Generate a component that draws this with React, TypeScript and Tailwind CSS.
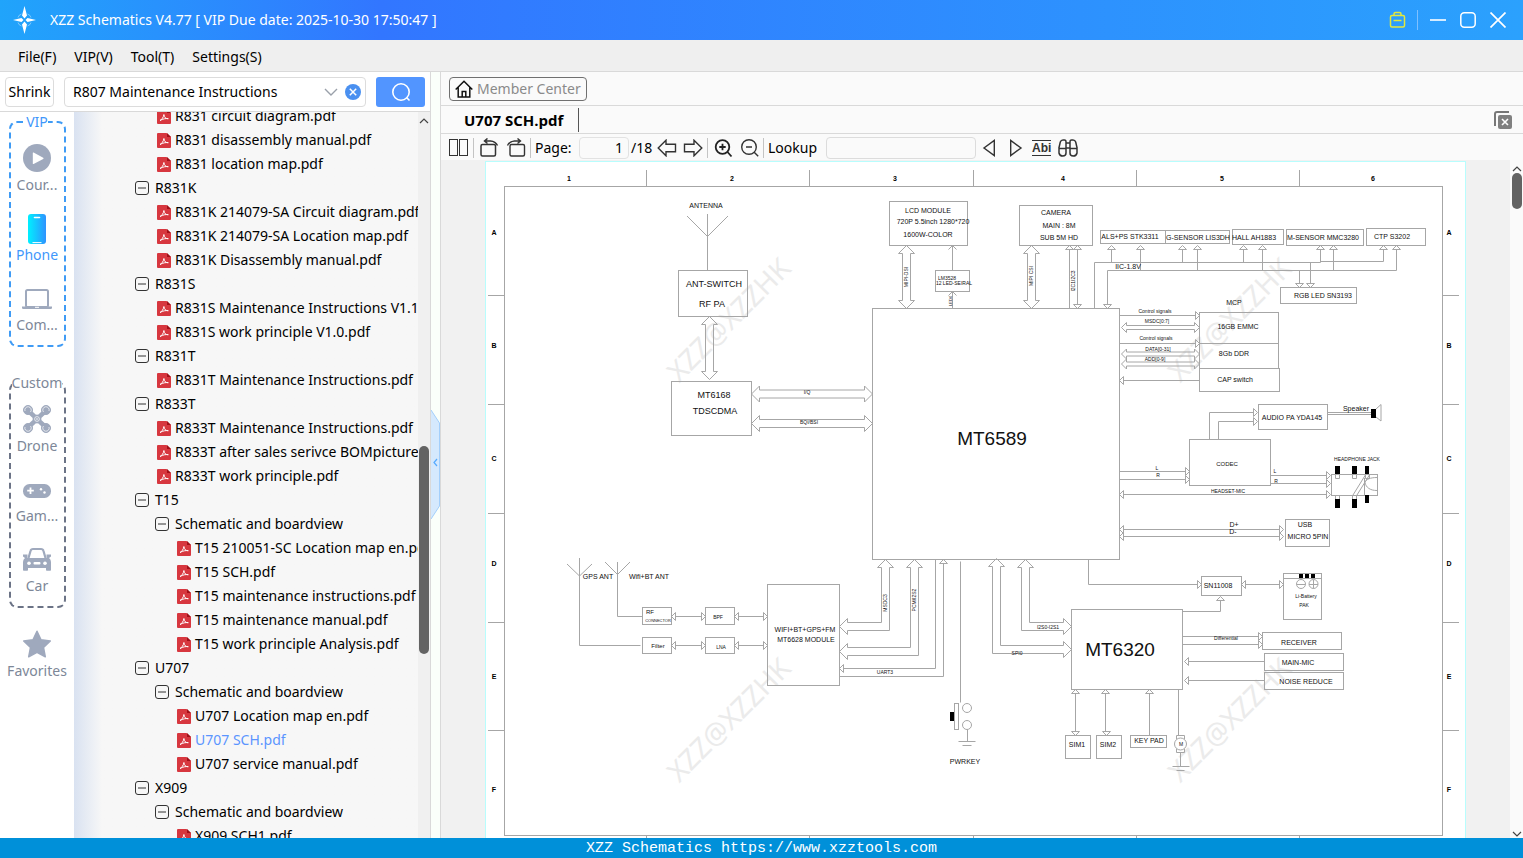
import { useState } from "react";
import type { ReactNode } from "react";

interface TreeRow {
    label: string
    level: number
    file?: boolean
}

const rows: TreeRow[] = [
    { label: "R831 circuit diagram.pdf", level: 1, file: true },
    { label: "R831 disassembly manual.pdf", level: 1, file: true },
    { label: "R831 location map.pdf", level: 1, file: true },
    { label: "R831K", level: 0 },
    { label: "R831K 214079-SA Circuit diagram.pdf", level: 1, file: true },
    { label: "R831K 214079-SA Location map.pdf", level: 1, file: true },
    { label: "R831K Disassembly manual.pdf", level: 1, file: true },
    { label: "R831S", level: 0 },
    { label: "R831S Maintenance Instructions V1.1.pdf", level: 1, file: true },
    { label: "R831S work principle V1.0.pdf", level: 1, file: true },
    { label: "R831T", level: 0 },
    { label: "R831T Maintenance Instructions.pdf", level: 1, file: true },
    { label: "R833T", level: 0 },
    { label: "R833T Maintenance Instructions.pdf", level: 1, file: true },
    { label: "R833T after sales serivce BOMpicture.pdf", level: 1, file: true },
    { label: "R833T work principle.pdf", level: 1, file: true },
    { label: "T15", level: 0 },
    { label: "Schematic and boardview", level: 1 },
    { label: "T15 210051-SC Location map en.pdf", level: 2, file: true },
    { label: "T15 SCH.pdf", level: 2, file: true },
    { label: "T15 maintenance instructions.pdf", level: 2, file: true },
    { label: "T15 maintenance manual.pdf", level: 2, file: true },
    { label: "T15 work principle Analysis.pdf", level: 2, file: true },
    { label: "U707", level: 0 },
    { label: "Schematic and boardview", level: 1 },
    { label: "U707 Location map en.pdf", level: 2, file: true },
    { label: "U707 SCH.pdf", level: 2, file: true },
    { label: "U707 service manual.pdf", level: 2, file: true },
    { label: "X909", level: 0 },
    { label: "Schematic and boardview", level: 1 },
    { label: "X909 SCH1.pdf", level: 2, file: true },
];

const indents = ["pl-[61px]", "pl-[81px]", "pl-[101px]"];

const PdfIcon = () => (
    <svg className="ml-[2px] h-[15px] w-[14px] shrink-0" viewBox="0 0 14 15" aria-hidden="true">
        <path d="M1 0h8.5L14 4v10a1 1 0 0 1-1 1H1a1 1 0 0 1-1-1V1a1 1 0 0 1 1-1z" fill="#d7373f" />
        <path d="M10 0l4 4h-4z" fill="#a01018" />
        <path d="M3 11.5c1.5-.6 3.6-3.2 3.9-6 .3 2.800 1.700 4.300 4.400 4.200-2.600-.4-5.300.1-8.300 1.800z" fill="none" stroke="#fff" strokeWidth="1" strokeLinejoin="round" />
    </svg>
);

const MinusBox = () => (
    <svg className="h-[14px] w-[14px] shrink-0" viewBox="0 0 14 14" fill="none" stroke="#333" aria-hidden="true">
        <rect x=".5" y=".5" width="13" height="13" rx="2.500" />
        <path d="M3 7h8" />
    </svg>
);

const CourseIcon = () => (
    <svg className="h-7 w-[30px]" viewBox="0 0 30 28" aria-hidden="true">
        <circle cx="15" cy="14" r="14" fill="#9fa9bd" />
        <path d="M10.800 9v10.500q0 .8.800.400l9.600-5q.8-.6 0-1.200l-9.600-5.200q-.8-.4-.8.500z" fill="#fff" />
    </svg>
);

const PhoneIcon = () => (
    <svg className="h-7 w-[30px] overflow-visible" viewBox="0 0 30 28" aria-hidden="true">
        <defs>
            <linearGradient id="phone" x1="0" x2="1" y1="0" y2="0">
                <stop offset="0" stopColor="#00f0ff" />
                <stop offset="1" stopColor="#2e93ff" />
            </linearGradient>
        </defs>
        <rect x="6" y="0" width="18" height="30" rx="3" fill="url(#phone)" />
        <path d="M12.500 3.500h5" stroke="#fff" strokeWidth="1.600" strokeLinecap="round" />
        <path d="M10.500 28.600h9" stroke="#fff" strokeWidth="1" />
    </svg>
);

const LaptopIcon = () => (
    <svg className="h-7 w-[30px]" viewBox="0 0 30 28" aria-hidden="true">
        <rect x="4" y="6" width="22" height="17" rx="1.500" fill="none" stroke="#9fa9bd" strokeWidth="2" />
        <path d="M0 22.500h30v1.200q0 1.300-1.300 1.300H1.300Q0 25 0 23.700z" fill="#9fa9bd" />
        <path d="M13 23.300h4" stroke="#fff" strokeWidth="1" />
    </svg>
);

const DroneIcon = () => (
    <svg className="h-7 w-[30px]" viewBox="0 0 30 28" aria-hidden="true">
        <g stroke="#9fa9bd" fill="none">
            <path d="M6 5.500l9 8.500 9-8.500M6 22.500L15 14l9 8.500" strokeWidth="4.500" />
            <g fill="#9fa9bd" strokeWidth="1">
                <circle cx="6" cy="5" r="4.500" />
                <circle cx="24" cy="5" r="4.500" />
                <circle cx="6" cy="23" r="4.500" />
                <circle cx="24" cy="23" r="4.500" />
                <circle cx="15" cy="14" r="4" />
            </g>
        </g>
        <g fill="none" stroke="#fff" strokeWidth=".7">
            <path d="M3 6a3.200 3.200 0 1 1 5.500 1M27 6a3.200 3.200 0 1 0-5.500 1M3 22a3.200 3.200 0 1 0 5.500-1M27 22a3.200 3.200 0 1 1-5.500-1" />
            <circle cx="15" cy="14" r="2.400" />
        </g>
        <circle cx="15" cy="14" r=".8" fill="#fff" />
    </svg>
);

const GamepadIcon = () => (
    <svg className="h-7 w-[30px]" viewBox="0 0 30 28" aria-hidden="true">
        <rect x="1" y="9" width="28" height="14" rx="6.500" fill="#9fa9bd" />
        <path d="M8.500 12.500v6.500M5.200 15.700h6.600" stroke="#fff" strokeWidth="1.800" />
        <circle cx="19" cy="14.300" r="1.200" fill="#fff" />
        <circle cx="22.500" cy="17.500" r="1.200" fill="#fff" />
    </svg>
);

const CarIcon = () => (
    <svg className="h-7 w-[30px]" viewBox="0 0 30 28" aria-hidden="true">
        <path d="M6.500 13l2-7q.5-2 2.500-2h8q2 0 2.500 2l2 7" fill="none" stroke="#9fa9bd" strokeWidth="2.200" />
        <path d="M1 9.500h4.500V13h19V9.500H29v2l-2 1.500q2 1.500 2 4V25q0 .8-.8.800h-3.400q-.8 0-.8-.8v-2H6v2q0 .8-.8.800H1.800Q1 25.800 1 25v-8q0-2.500 2-4l-2-1.500z" fill="#9fa9bd" />
        <circle cx="7" cy="18.300" r="1.800" fill="#fff" />
        <circle cx="23" cy="18.300" r="1.800" fill="#fff" />
        <rect x="11.500" y="17" width="7" height="2.600" rx="1" fill="#fff" />
    </svg>
);

const StarIcon = () => (
    <svg className="h-7 w-[30px]" viewBox="0 0 30 28" aria-hidden="true">
        <path d="M15 1.200l4 8.600 9.300 1.200-6.800 6.500 1.800 9.300-8.300-4.500-8.300 4.500 1.800-9.300L1.700 11 11 9.800z" fill="#9fa9bd" stroke="#9fa9bd" strokeWidth="1.500" strokeLinejoin="round" />
    </svg>
);

interface CategoryProps {
    icon: ReactNode
    label: string
    active?: boolean
}

const Category = ({ icon, label, active }: CategoryProps) => (
    <button type="button" className={`flex h-[70px] w-full flex-col items-center gap-[3px] pt-3 text-sm leading-5 whitespace-nowrap ${active ? "text-[#3f97fb]" : "text-[#7d8798]"}`}>
        {icon}
        <span>{label}</span>
    </button>
);

const Sidebar = () => (
    <nav className="flex w-[74px] shrink-0 flex-col items-center overflow-hidden bg-white">
        <fieldset className="w-[57px] rounded-lg border-2 border-dashed border-[#3f9bf5] pb-[3px]">
            <legend className="mx-auto h-5 text-sm leading-5 text-[#3f97fb]">VIP</legend>
            <Category icon={<CourseIcon />} label="Cour..." />
            <Category icon={<PhoneIcon />} label="Phone" active />
            <Category icon={<LaptopIcon />} label="Com..." />
        </fieldset>
        <fieldset className="mt-[26px] w-[57px] rounded-lg border-2 border-dashed border-[#6b7386] pb-[3px]">
            <legend className="mx-auto h-5 text-sm leading-5 text-[#7d8798]">Custom</legend>
            <Category icon={<DroneIcon />} label="Drone" />
            <Category icon={<GamepadIcon />} label="Gam..." />
            <Category icon={<CarIcon />} label="Car" />
        </fieldset>
        <div className="mt-[10px] w-full">
            <Category icon={<StarIcon />} label="Favorites" />
        </div>
    </nav>
);

const ScrollArrow = ({ down }: { down?: boolean }) => (
    <svg className="h-2 w-[10px] shrink-0" viewBox="0 0 10 8" fill="none" stroke="#444" strokeWidth="1.200" aria-hidden="true">
        <path d={down ? "M1 2l4 4 4-4" : "M1 6l4-4 4 4"} />
    </svg>
);

const Tree = () => {
    const [selected, setSelected] = useState("U707 SCH.pdf");

    return (
        <div className="flex min-w-0 flex-1 bg-linear-to-r from-[#d9e2f1] to-[#f7f7f7] to-[28px]">
            <ul className="-mt-2 min-w-0 flex-1 overflow-hidden">
                {rows.map((row, i) => (
                    <li key={i}>
                        <button
                            type="button"
                            onClick={() => { setSelected(row.label) }}
                            className={`flex h-6 w-full items-center text-sm leading-6 whitespace-nowrap ${indents[row.level]} ${row.file ? "gap-1" : "gap-[6px]"} ${row.file && row.label === selected ? "text-[#5b95ff]" : "text-black"}`}
                        >
                            {row.file ? <PdfIcon /> : <MinusBox />}
                            <span>{row.label}</span>
                        </button>
                    </li>
                ))}
            </ul>
            <div className="flex w-3 shrink-0 flex-col items-center bg-[#f0f0f0] pt-[5px]">
                <ScrollArrow />
                <div className="mt-[321px] h-[208px] w-[10px] rounded-full bg-[#636363]"></div>
            </div>
        </div>
    );
};

/* ---- toolbar drawings ---- */

const Sep = () => <span className="h-5 w-px shrink-0 bg-[#c4c4c4]"></span>;

interface ToolProps {
    label: string
    width: string
    children: ReactNode
}

const Tool = ({ label, width, children }: ToolProps) => (
    <button type="button" aria-label={label} className={`flex h-5 shrink-0 items-center justify-center ${width}`}>
        {children}
    </button>
);

const Toolbar = () => {
    const [page, setPage] = useState("1");
    const [lookup, setLookup] = useState("");

    return (
        <div className="flex h-[26px] shrink-0 items-center overflow-hidden bg-[#fafafa] pt-px pl-2 text-sm text-black">
            <Tool label="Two pages" width="w-5">
                <svg className="h-[18px] w-5" viewBox="0 0 20 18" fill="none" stroke="#333"><rect x=".5" y=".5" width="8" height="16" /><rect x="10.500" y=".5" width="8" height="16" /></svg>
            </Tool>
            <div className="mr-[6px] ml-1 flex"><Sep /></div>
            <Tool label="Rotate left" width="w-5">
                <svg className="h-5 w-5" viewBox="0 0 20 20" fill="none" stroke="#333" strokeWidth="1.500"><rect x="1" y="6.500" width="14.500" height="11.500" rx="1.500" /><path d="M4.500 3h6q5 .3 7 4.500M7.500.500L4.500 3l3 2.500" /></svg>
            </Tool>
            <span className="w-[6px]"></span>
            <Tool label="Rotate right" width="w-5">
                <svg className="h-5 w-5" viewBox="0 0 20 20" fill="none" stroke="#333" strokeWidth="1.400"><rect x="4" y="6.500" width="14.500" height="11.500" rx="1.500" /><path d="M14.500 3h-6q-5 .3-7 4.500M11.500.500l3 2.500-3 2.500" /></svg>
            </Tool>
            <div className="mx-1 flex"><Sep /></div>
            <label htmlFor="page" className="w-11 shrink-0">Page:</label>
            <input id="page" value={page} onChange={(e) => { setPage(e.target.value) }} className="h-[22px] w-[50px] shrink-0 rounded-sm border border-[#e2e2e2] bg-[#fafafa] pr-[5px] text-right outline-none" />
            <span className="ml-[2px] w-[26px] shrink-0">/18</span>
            <Tool label="Previous page" width="w-5">
                <svg className="h-[18px] w-5" viewBox="0 0 20 18" fill="none" stroke="#333" strokeWidth="1.400"><path d="M9 1.200L1.200 9 9 16.800v-4h9.500V5.200H9z" /></svg>
            </Tool>
            <span className="w-[6px]"></span>
            <Tool label="Next page" width="w-5">
                <svg className="h-[18px] w-5" viewBox="0 0 20 18" fill="none" stroke="#333" strokeWidth="1.400"><path d="M11 1.200L18.800 9 11 16.800v-4H1.500V5.200H11z" /></svg>
            </Tool>
            <div className="mr-[6px] ml-1 flex"><Sep /></div>
            <Tool label="Zoom in" width="w-5">
                <svg className="h-5 w-5" viewBox="0 0 20 20" fill="none" stroke="#222" strokeWidth="1.800"><circle cx="8.500" cy="9" r="6.800" /><path d="M13.500 14l4 4.500M8.500 5.800v6.400M5.300 9h6.400" /></svg>
            </Tool>
            <span className="w-[6px]"></span>
            <Tool label="Zoom out" width="w-5">
                <svg className="h-5 w-5" viewBox="0 0 20 20" fill="none" stroke="#333" strokeWidth="1.400"><circle cx="9" cy="9" r="7.300" /><path d="M14.200 14.200l4 4M6 9h6" /></svg>
            </Tool>
            <div className="mr-1 ml-[3px] flex"><Sep /></div>
            <label htmlFor="lookup" className="w-[58px] shrink-0">Lookup</label>
            <input id="lookup" value={lookup} onChange={(e) => { setLookup(e.target.value) }} className="h-[22px] w-[150px] shrink-0 rounded-sm border border-[#dcdcdc] bg-[#fafafa] px-1 outline-none" />
            <span className="w-1"></span>
            <Tool label="Find previous" width="w-5">
                <svg className="h-[18px] w-5" viewBox="0 0 20 18" fill="none" stroke="#333" strokeWidth="1.400"><path d="M14.300 1.500v15L4 9z" /></svg>
            </Tool>
            <span className="w-[6px]"></span>
            <Tool label="Find next" width="w-5">
                <svg className="h-[18px] w-5" viewBox="0 0 20 18" fill="none" stroke="#333" strokeWidth="1.400"><path d="M4.700 1.500v15L15 9z" /></svg>
            </Tool>
            <span className="w-[6px]"></span>
            <button type="button" className="h-4 shrink-0 border-y border-[#333] font-['Liberation_Sans'] text-xs leading-3 font-bold text-[#333]">Abi</button>
            <span className="w-[6px]"></span>
            <Tool label="Find in folder" width="w-[22px]">
                <svg className="h-[18px] w-[22px]" viewBox="0 0 22 18" fill="none" stroke="#333" strokeWidth="1.500">
                    <path d="M1.800 9.500L3.300 3Q4 1 6 1h1.500Q9 1 9 3v11q0 3-3.200 3T2 14V9.500h7M20.200 9.500L18.700 3Q18 1 16 1h-1.500Q13 1 13 3v11q0 3 3.200 3t3.800-3V9.500h-7M9 4h4M9 9h4" />
                </svg>
            </Tool>
        </div>
    );
};

/* ---- schematic sheet ---- */

const tipPaths = {
    up: "l4 4h-8z",
    down: "l4 -4h-8z",
    left: "l4 -4v8z",
    right: "l-4 -4v8z",
};

type Dir = keyof typeof tipPaths;

const tips: [number, number, Dir][] = [
    [1069.5, 245.5, "up"], [1077.5, 245.5, "up"], [1077.5, 308.5, "down"],
    [1111.5, 245.5, "up"], [1140.5, 245.5, "up"], [1182.5, 245.5, "up"], [1197.5, 245.5, "up"], [1243.5, 245.5, "up"],
    [1262.5, 245.5, "up"], [1320.5, 245.5, "up"], [1333.5, 245.5, "up"], [1383.5, 245.5, "up"], [1396.5, 245.5, "up"],
    [1107.5, 308.5, "down"], [1299.5, 287.5, "down"], [1310.5, 287.5, "down"],
    [1199.5, 315.5, "right"], [1199.5, 343.5, "right"], [1119.5, 380.5, "left"],
    [1257.5, 412.5, "right"], [1257.5, 421.5, "right"],
    [1189.5, 471.5, "right"], [1189.5, 479.5, "right"],
    [1330.5, 475.5, "right"], [1330.5, 483.5, "right"], [1330.5, 494.5, "right"], [1119.5, 494.5, "left"],
    [1119.5, 529.5, "left"], [1119.5, 536.5, "left"], [1283.5, 529.5, "right"], [1283.5, 536.5, "right"],
    [1201.5, 584.5, "right"], [1241.5, 584.5, "left"], [1283.5, 584.5, "right"], [1220.5, 596.5, "up"],
    [1262.5, 636.5, "right"], [1262.5, 644.5, "right"], [1184.5, 661.5, "left"], [1184.5, 680.5, "left"],
    [1075.5, 689.5, "up"], [1105.5, 689.5, "up"], [1149.5, 689.5, "up"], [1075.5, 735.5, "down"], [1106.5, 735.5, "down"],
    [671.5, 616.5, "left"], [705.5, 616.5, "right"], [734.5, 616.5, "left"], [767.5, 616.5, "right"],
    [671.5, 645.5, "left"], [705.5, 645.5, "right"], [734.5, 645.5, "left"], [767.5, 645.5, "right"],
    [839.5, 668.5, "left"], [943.5, 559.5, "up"],
];

// x1, y1, x2, y2
const boxes: [number, number, number, number][] = [
    [678, 270, 747, 316], [671, 381, 751, 435], [872, 308, 1119, 559], [889, 201, 967, 245], [935, 270, 969, 291],
    [1019, 205, 1092, 245], [1100, 230, 1165, 243], [1165, 230, 1229, 243], [1232, 229, 1283, 244], [1286, 229, 1363, 245],
    [1366, 228, 1425, 245], [1280, 287, 1356, 303], [1199, 312, 1278, 343], [1199, 343, 1278, 368], [1199, 368, 1279, 391],
    [1258, 404, 1327, 429], [1189, 439, 1270, 485], [1331, 474, 1377, 495], [1285, 519, 1329, 546], [1201, 576, 1241, 595],
    [1283, 573, 1321, 619], [1071, 609, 1182, 689], [1262, 632, 1341, 649], [1264, 653, 1343, 670], [1264, 672, 1343, 689],
    [1065, 735, 1090, 758], [1096, 735, 1121, 758], [1130, 735, 1166, 747], [642, 607, 671, 624], [642, 637, 671, 653],
    [705, 607, 734, 624], [705, 637, 734, 653], [767, 584, 839, 685], [954, 703, 958, 729],
];

const wires = [
    "M707.5 214V270", "M952.5 245.5V270.5M952.5 291.5V308.5",
    "M1069.5 249.500V308.500M1077.500 249.500V304.500",
    "M1111.500 249.500V262.500M1182.500 249.500V262.500M1243.500 249.500V262.500M1320.500 249.500V262.500M1383.500 249.500V261.500H1320.500",
    "M1140.500 249.500V270.500M1197.500 249.500V270.500M1262.500 249.500V270.500M1333.500 249.500V270.500M1396.500 249.500V270.500",
    "M1094.500 308.500V262.500H1320.500M1107.500 304.500V270.500H1396.500M1299.500 270.500V283.500M1310.500 262.500V283.500",
    "M1119.500 315.500H1195.500M1119.500 343.500H1195.500M1123.500 380.500H1199.500",
    "M1209.500 439.500V412.500H1253.500M1218.500 439.500V421.500H1253.500M1327.500 412.500H1371.500M1327.500 414.500H1371.500",
    "M1119.500 471.500H1185.500M1119.500 479.500H1185.500M1270.500 475.500H1326.500M1270.500 483.500H1326.500M1123.500 494.500H1326.500",
    "M1123.500 529.500H1279.500M1123.500 536.500H1279.500",
    "M1088.500 559.500V584.500H1197.500M1245.500 584.500H1279.500M1182.500 611.500H1220.500V600.500M1283.500 578.500H1321.500",
    "M1182.500 636.500H1258.500M1182.500 644.500H1258.500M1188.500 661.500H1264.500M1188.500 680.500H1264.500",
    "M1075.500 693.500V731.500M1105.500 693.500V731.500M1149.500 693.500V735.500M1178.500 689.500V735.500",
    "M579.500 558V645.500H640.500M617.500 562V616.500H642.500",
    "M675.500 616.500H701.500M738.500 616.500H763.500M675.500 645.500H701.500M738.500 645.500H763.500",
    "M935.500 559.500V668.500H843.500M943.500 563.500V676.500H839.500M960.500 561.500V702.500",
    "M967.500 729.500V741.500M958.500 741.500H975.500M962.500 745.500H971.500",
    "M1176.500 739V735.500H1184.500V739M1176.500 749V752.500H1184.500V749M1180.500 753V766.500M1172.500 766.500H1189.500M1176.500 770.500H1184.500",
    "M1335.500 474V478.500H1339.500V474M1352.500 474V478.500H1356.500V474M1365.500 474V478.500H1369.500V474M1335.500 499V495.500M1339.500 499V495.500M1352.500 499V495.500M1356.500 499V495.500M1364.500 478V495",
];

// wide hollow arrows, straight and with one elbow
const vArrow = (x: number, y1: number, y2: number) =>
    `M${x} ${y1}l8 8h-4V${y2 - 8}h4l-8 8l-8 -8h4V${y1 + 8}h-4z`;
const hArrow = (y: number, x1: number, x2: number, half = 4, head = 8) =>
    `M${x1} ${y}l${head} ${-head}v${head - half}H${x2 - head}v${half - head}l${head} ${head}l${-head} ${head}v${half - head}H${x1 + head}v${head - half}z`;
const elbowLeft = (x: number, y: number, tx: number, ty: number) =>
    `M${x} ${y}l8 8h-4V${ty + 4}H${tx + 8}v4l-8 -8l8 -8v4H${x - 4}V${y + 8}h-4z`;
const elbowRight = (x: number, y: number, tx: number, ty: number) =>
    `M${x} ${y}l8 8h-4V${ty - 4}H${tx - 8}v-4l8 8l-8 8v-4H${x - 4}V${y + 8}h-4z`;

const wideArrows = [
    vArrow(709.5, 316.5, 379.5), vArrow(906.5, 245.5, 308.5), vArrow(1031.5, 245.5, 308.5),
    hArrow(394, 751.5, 872.5), hArrow(423.5, 751.5, 872.5),
    hArrow(327.5, 1121.5, 1199.5, 2, 5), hArrow(354, 1121.5, 1199.5, 2, 5), hArrow(364, 1121.5, 1199.5, 2, 5),
    elbowLeft(885.5, 559.5, 839.5, 626.5), elbowLeft(914.5, 559.5, 839.5, 651.5),
    elbowRight(996.5, 558.5, 1071.5, 649.5), elbowRight(1025.5, 559.5, 1071.5, 626.5),
];

// text, centre x, baseline y, size
const labels: [string, number, number, number][] = [
    ["ANTENNA", 706, 208, 7], ["ANT-SWITCH", 714, 287, 9], ["RF PA", 712, 307, 9], ["MT6168", 714, 398, 9], ["TDSCDMA", 715, 414, 9],
    ["I/Q", 807, 394, 5], ["BQI/BSI", 809, 424, 5], ["MT6589", 992, 445, 19], ["MT6320", 1120, 656, 19],
    ["LCD MODULE", 928, 213, 7], ["720P 5.5inch 1280*720", 933, 224, 7], ["1600W-COLOR", 928, 237, 7],
    ["LM3528", 947, 280, 5], ["12 LED-SEIRAL", 954, 285, 5], ["CAMERA", 1056, 215, 7], ["MAIN : 8M", 1059, 228, 7], ["SUB 5M HD", 1059, 240, 7],
    ["ALS+PS STK3311", 1130, 239, 7], ["G-SENSOR LIS3DH", 1198, 240, 7], ["HALL AH1883", 1254, 240, 7], ["M-SENSOR MMC3280", 1323, 240, 7],
    ["CTP S3202", 1392, 239, 7], ["IIC-1.8V", 1128, 269, 7], ["RGB LED SN3193", 1323, 298, 7], ["MCP", 1234, 305, 7],
    ["16GB EMMC", 1238, 329, 7], ["8Gb DDR", 1234, 356, 7], ["CAP switch", 1235, 382, 7],
    ["Control signals", 1155, 313, 5], ["MSDC[0:7]", 1157, 323, 5], ["Control signals", 1156, 340, 5], ["DATA[0-31]", 1158, 351, 5], ["ADD[0-9]", 1155, 361, 5],
    ["AUDIO PA YDA145", 1292, 420, 7], ["Speaker", 1356, 411, 7], ["CODEC", 1227, 466, 6], ["L", 1157, 470, 5], ["R", 1158, 477, 5],
    ["L", 1275, 473, 5], ["R", 1276, 483, 5], ["HEADSET-MIC", 1228, 493, 5], ["HEADPHONE JACK", 1357, 461, 5],
    ["D+", 1234, 527, 7], ["D-", 1233, 534, 7], ["USB", 1305, 527, 7], ["MICRO 5PIN", 1308, 539, 7], ["SN11008", 1218, 588, 7],
    ["Li-Battery", 1306, 598, 5], ["PAK", 1304, 607, 5], ["Differential", 1226, 640, 5], ["RECEIVER", 1299, 645, 7], ["MAIN-MIC", 1298, 665, 7],
    ["NOISE REDUCE", 1306, 684, 7], ["SIM1", 1077, 747, 7], ["SIM2", 1108, 747, 7], ["KEY PAD", 1149, 743, 7], ["M", 1181, 746, 5],
    ["I2S0-I2S1", 1048, 629, 5], ["SPI0", 1017, 655, 5], ["GPS ANT", 598, 579, 7], ["Wifi+BT ANT", 649, 579, 7], ["RF", 650, 614, 6],
    ["CONNECTOR", 658, 622, 4], ["Filter", 658, 648, 6], ["BPF", 718, 619, 5], ["LNA", 721, 649, 5],
    ["WIFI+BT+GPS+FM", 805, 632, 7], ["MT6628 MODULE", 806, 642, 7], ["UART3", 885, 674, 5], ["PWRKEY", 965, 764, 7],
];

const sideLabels: [string, number, number, number][] = [
    ["MIPI-DSI", 906, 277, 5], ["MIPI CSI", 1031, 276, 5], ["I2C1I2C3", 1073, 281, 5], ["LED4", 950, 301, 4], ["MSDC3", 885, 603, 5], ["PCM/I2S2", 914, 600, 5],
];

const columns: [string, number][] = [["1", 569], ["2", 732], ["3", 895], ["4", 1063], ["5", 1222], ["6", 1373]];
const lines: [string, number][] = [["A", 235], ["B", 348], ["C", 461], ["D", 566], ["E", 679], ["F", 792]];
const watermarks: [number, number][] = [[728, 319], [1229, 319], [728, 719], [1229, 719]];

const Sheet = () => (
    <svg className="block w-full bg-white" viewBox="486 162 979 740" fontFamily="'Liberation Sans', Arial, sans-serif" textAnchor="middle" role="img" aria-label="U707 block diagram">
        <g fill="#ebebeb" fontFamily="'Noto Sans', sans-serif" fontSize="28">
            {watermarks.map(([x, y]) => (
                <text key={`${x}-${y}`} x={x} y={y} dominantBaseline="central" transform={`rotate(-45 ${x} ${y})`}>XZZ@XZZHK</text>
            ))}
        </g>
        <g fill="none" stroke="#a6a6a6" strokeWidth="1">
            <rect x="504.5" y="186.500" width="938" height="649" />
            {[646.5, 809.5, 973.5, 1136.5, 1299.5].map((x) => <path key={x} d={`M${x} 170V186.500M${x} 835.500V852`} />)}
            {[295.5, 404.5, 513.5, 622.5, 730.5].map((y) => <path key={y} d={`M488 ${y}H504.500M1442.500 ${y}H1459`} />)}
            {boxes.map(([x1, y1, x2, y2], i) => <rect key={i} x={x1 + 0.5} y={y1 + 0.5} width={x2 - x1} height={y2 - y1} />)}
            {wires.map((d) => <path key={d} d={d} />)}
            {wideArrows.map((d) => <path key={d} d={d} />)}
            {tips.map(([x, y, dir]) => <path key={`${x}-${y}`} d={`M${x} ${y}${tipPaths[dir]}`} />)}
            <path d="M687 216l20.500 20.500L728 216M567 564l12.500 12L592 564M605 562l12.500 12.500L630 562M948.500 249.500l4-4 4 4M948.500 295.500l4-4 4 4" />
            <path d="M1376 409l5-4.500v16.500l-5-4M1353 495l13-21M1357 495l13-21M1377 477.500c-7 0-11 2-12 5 1 5 5 8 12 8" />
            <circle cx="1301" cy="584" r="4.500" />
            <circle cx="1313.500" cy="584" r="4.500" />
            <path d="M1297 584.500h8M1309 584.500h9M1313.500 580v8.500" />
            <circle cx="967" cy="708" r="4.500" />
            <circle cx="967" cy="725" r="4.500" />
            <circle cx="1180.500" cy="744" r="6" />
        </g>
        <path d="M1371 409h5v9h-5zM1335 466h5v8h-5zM1352 466h5v8h-5zM1365 466h4v8h-4zM1335 499h5v9h-5zM1352 499h5v9h-5zM1365 495h4v8h-4zM1299 574h4v4h-4zM1305 574h4v4h-4zM1311 574h4v4h-4zM950 712h4v9h-4z" fill="#000" />
        <g fill="#111">
            {labels.map(([text, x, y, size], i) => (
                <text key={i} x={x} y={y} fontSize={size}>{text}</text>
            ))}
            {sideLabels.map(([text, x, y, size]) => (
                <text key={text} x={x} y={y} fontSize={size} dominantBaseline="central" transform={`rotate(-90 ${x} ${y})`}>{text}</text>
            ))}
        </g>
        <g fill="#000" fontSize="7" fontWeight="bold">
            {columns.map(([text, x]) => <text key={text} x={x} y="181">{text}</text>)}
            {lines.map(([text, y]) => (
                <g key={text}>
                    <text x="494" y={y}>{text}</text>
                    <text x="1449" y={y}>{text}</text>
                </g>
            ))}
        </g>
    </svg>
);

const TitleBar = () => (
    <header className="flex h-10 shrink-0 items-center bg-linear-to-r from-[#20a4fb] via-[#3276ff] via-25% to-[#2ba1fd] text-white">
        <svg className="ml-3 h-7 w-[26px]" viewBox="0 0 26 28" fill="#fff" aria-hidden="true">
            <path d="M12.500 0l2.500 9.500-2.500 3-2.500-3zM12.500 28l2.500-9.500-2.500-3-2.500 3zM1 14l8.500-2 2 2-2 2zM24 14l-8.500-2-2 2 2 2z" />
            <path d="M9.500 8q-3 1-3.500 3.500M15.500 8q3 1 3.500 3.500M9.500 20q-3-1-3.500-3.500M15.500 20q3-1 3.500-3.500" fill="none" stroke="#fff" strokeWidth=".8" opacity=".5" />
        </svg>
        <h1 className="ml-3 flex-1 text-sm whitespace-pre">XZZ Schematics V4.77 [ VIP Due date: 2025-10-30 17:50:47 ]</h1>
        <button type="button" aria-label="Toolbox">
            <svg className="h-[18px] w-[18px]" viewBox="0 0 18 18" fill="none" stroke="#e3e83c" strokeWidth="1.500"><rect x="1.500" y="4.500" width="14" height="11.500" rx="1.500" /><path d="M5 4.500V3q0-1.500 1.500-1.500h4Q12 1.500 12 3v1.500M4.500 9.500h8" /></svg>
        </button>
        <span className="mx-[10px] h-5 w-px bg-[#7fc0ff]"></span>
        <button type="button" aria-label="Minimize" className="flex h-5 w-5 items-center justify-center">
            <svg className="h-4 w-4" viewBox="0 0 16 16" stroke="#fff" strokeWidth="1.600"><path d="M0 8h16" /></svg>
        </button>
        <button type="button" aria-label="Maximize" className="ml-[10px] flex h-5 w-5 items-center justify-center">
            <svg className="h-4 w-4" viewBox="0 0 16 16" fill="none" stroke="#fff" strokeWidth="1.500"><rect x=".800" y=".800" width="14.400" height="14.400" rx="3.500" /></svg>
        </button>
        <button type="button" aria-label="Close" className="mr-[15px] ml-[10px] flex h-5 w-5 items-center justify-center">
            <svg className="h-4 w-4" viewBox="0 0 16 16" stroke="#fff" strokeWidth="1.700"><path d="M.500.500l15 15M15.500.500l-15 15" /></svg>
        </button>
    </header>
);

const SearchBar = () => {
    const [query, setQuery] = useState("R807 Maintenance Instructions");

    return (
        <div className="flex h-10 shrink-0 items-center border-b border-[#d9d9d9] bg-white pr-[5px] pl-[5px] text-sm">
            <button type="button" className="h-[30px] w-[49px] shrink-0 rounded-sm border border-[#dcdcdc] pt-px text-black">Shrink</button>
            <div className="ml-[10px] flex h-[30px] min-w-0 flex-1 items-center rounded-sm border border-[#dcdcdc] pr-1 pl-2">
                <input aria-label="Search" value={query} onChange={(e) => { setQuery(e.target.value) }} className="min-w-0 flex-1 pt-px text-black outline-none" />
                <button type="button" aria-label="History">
                    <svg className="h-3 w-[14px]" viewBox="0 0 14 12" fill="none" stroke="#9aa0aa" strokeWidth="1.400"><path d="M1 3l6 6 6-6" /></svg>
                </button>
                <button type="button" aria-label="Clear" className="ml-[7px]" onClick={() => { setQuery("") }}>
                    <svg className="h-4 w-4" viewBox="0 0 16 16"><circle cx="8" cy="8" r="8" fill="#4a90f0" /><path d="M4.800 4.800l6.400 6.400M11.200 4.800l-6.400 6.400" stroke="#fff" strokeWidth="1.500" /></svg>
                </button>
            </div>
            <button type="button" aria-label="Search" className="ml-[10px] flex h-[30px] w-[49px] shrink-0 items-center justify-center rounded-[3px] bg-[#5295ff]">
                <svg className="h-5 w-5" viewBox="0 0 20 20" fill="none" stroke="#fff" strokeWidth="1.600"><circle cx="10" cy="10" r="8.200" /><path d="M15.500 15.500l3 3" /></svg>
            </button>
        </div>
    );
};

const App = () => {
    return (
        <div className="flex h-screen flex-col overflow-hidden bg-white font-['Noto_Sans','Open_Sans',sans-serif]">
            <TitleBar />
            <nav className="flex h-8 shrink-0 items-center gap-[18px] border-b border-[#d9d9d9] bg-[#efefef] pt-[2px] pl-[18px] text-sm text-black">
                {["File(F)", "VIP(V)", "Tool(T)", "Settings(S)"].map((item) => (
                    <button key={item} type="button">{item}</button>
                ))}
            </nav>

            <main className="flex min-h-0 flex-1">
                <aside className="flex w-[431px] shrink-0 flex-col border-r border-[#d9d9d9]">
                    <SearchBar />
                    <div className="flex min-h-0 flex-1 overflow-hidden">
                        <Sidebar />
                        <Tree />
                    </div>
                </aside>

                <div className="flex w-[10px] shrink-0 flex-col border-r border-[#d9d9d9] bg-[#fafffa] pt-[338px]">
                    <button type="button" aria-label="Collapse panel">
                        <svg className="block h-[109px] w-[9px]" viewBox="0 0 9 109" fill="#d5e9fd" stroke="#a3cffb"><path d="M0 0l8.500 13v83L0 109" /><path d="M6 49l-3 3.500 3 3.500" fill="none" stroke="#55aaff" strokeWidth="1.200" /></svg>
                    </button>
                </div>

                <section className="flex min-w-0 flex-1 flex-col">
                    <div className="flex h-[34px] shrink-0 items-center border-b border-[#d9d9d9] bg-[#fafafa] pl-2">
                        <button type="button" className="flex h-6 items-center gap-1 rounded-sm border border-[#707070] px-[5px] text-sm leading-5 text-[#8a8a8a]">
                            <svg className="h-[18px] w-[18px]" viewBox="0 0 18 18" fill="none" stroke="#111" strokeWidth="1.500"><path d="M.700 9.500L9 1.200l8.300 8.300M3.200 7.500V17h11.600V7.500M7.200 17v-5.500h3.600V17" /></svg>
                            Member Center
                        </button>
                    </div>
                    <div className="flex h-7 shrink-0 items-center justify-between border-b border-[#d9d9d9] bg-[#fafafa] pr-[11px]">
                        <button type="button" className="h-6 border-r border-[#555] pr-[15px] pl-[23px] font-['Open_Sans',sans-serif] text-[15px] leading-[22px] font-bold text-black">U707 SCH.pdf</button>
                        <button type="button" aria-label="Close all">
                            <svg className="h-[18px] w-[18px]" viewBox="0 0 18 18"><path d="M1 15V3q0-2 2-2h12" fill="none" stroke="#777" strokeWidth="2" /><rect x="4" y="4" width="14" height="14" rx="2" fill="#808080" /><path d="M8 8l6 6M14 8l-6 6" stroke="#fff" strokeWidth="1.600" /></svg>
                        </button>
                    </div>
                    <Toolbar />
                    <div className="flex min-h-0 flex-1 bg-[#f1f1f1]">
                        <div className="min-w-0 flex-1 overflow-hidden px-[44px] pt-px">
                            <div className="border border-[#b8fdfd]">
                                <Sheet />
                            </div>
                        </div>
                        <div className="flex w-[13px] shrink-0 flex-col items-center bg-[#fafafa] pt-[5px]">
                            <ScrollArrow />
                            <div className="h-9 w-[10px] shrink-0 rounded-full bg-[#636363]"></div>
                            <div className="flex-1"></div>
                            <ScrollArrow down />
                        </div>
                    </div>
                </section>
            </main>

            <footer className="h-5 shrink-0 bg-[#0090d9] pt-px text-center font-['Liberation_Mono',monospace] text-[15px] leading-5 text-white">
                XZZ Schematics https://www.xzztools.com
            </footer>
        </div>
    );
};

export default App;
